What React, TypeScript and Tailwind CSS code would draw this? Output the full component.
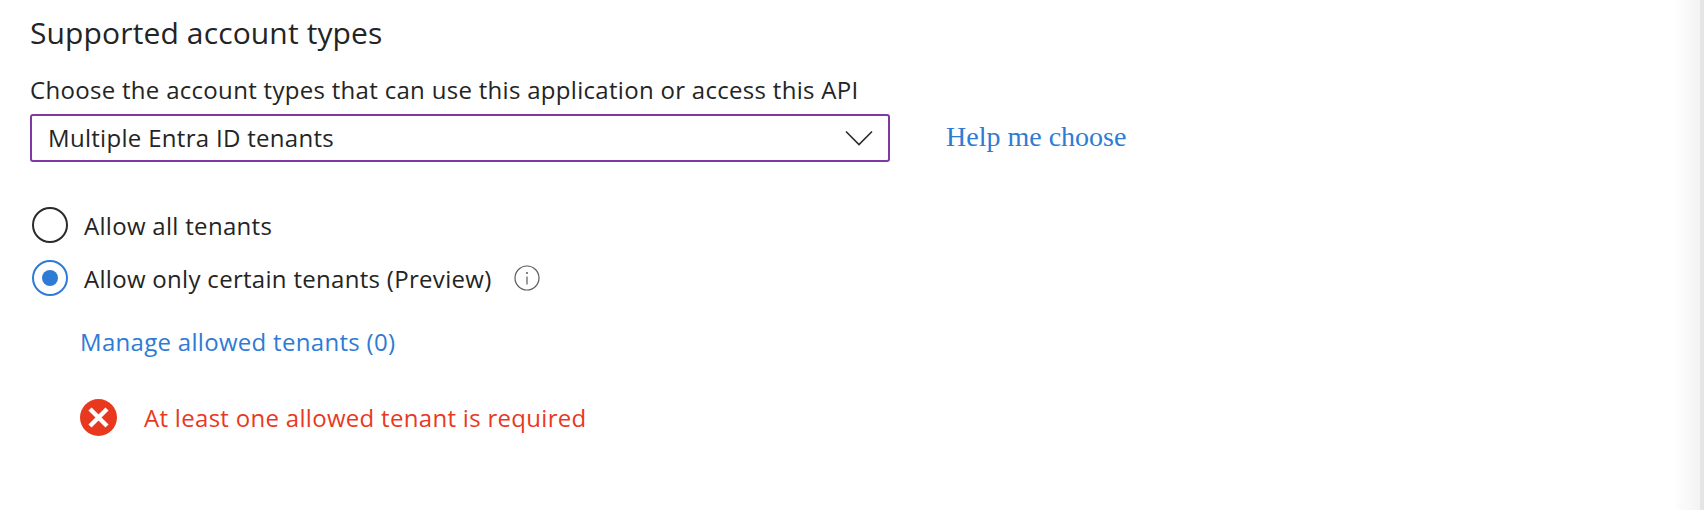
const FONT = "font-['Open_Sans','Noto_Sans',sans-serif]";

function Radio({ label, checked }: { label: string; checked?: boolean }) {
  return (
    <div className="flex items-center h-[40px]">
      <span
        className={`flex items-center justify-center ml-[2px] w-[36px] h-[36px] rounded-full border-2 ${
          checked ? "border-[#2e7bd6]" : "border-[#2b2b2b]"
        }`}
      >
        {checked && <span className="w-[16px] h-[16px] rounded-full bg-[#2e7bd6]" />}
      </span>
      <span className="ml-[16px] pt-[1px] text-[24px] tracking-[0.3px] leading-[40px] text-[#242424]">{label}</span>
    </div>
  );
}

export default function App() {
  return (
    <div className={`flex w-full h-[510px] bg-white overflow-hidden ${FONT}`}>
      <main className="flex-1 pl-[30px]">
        <h2 className="mt-[14px] text-[30px] tracking-[0.13px] leading-[38px] font-normal text-[#242424]">Supported account types</h2>
        <p className="mt-[23px] text-[24px] tracking-[0.3px] leading-[30px] text-[#242424]">
          Choose the account types that can use this application or access this API
        </p>
        <div className="flex items-center mt-[9px]">
          <div className="flex items-center justify-between w-[860px] h-[48px] pl-[16px] pr-[15px] rounded-[3px] border-2 border-[#803a9f] text-[24px] tracking-[0.3px] text-[#242424]">
            <span>Multiple Entra ID tenants</span>
            <svg width="28" height="16" viewBox="0 0 28 16" fill="none" className="text-[#2b2b2b]">
              <path d="M1 1.5L14 14.5L27 1.5" stroke="currentColor" strokeWidth="1.6" />
            </svg>
          </div>
          <a href="#" className="ml-[56px] pb-[2px] font-['Liberation_Serif',serif] text-[28px] text-[#2e7bd6]">
            Help me choose
          </a>
        </div>
        <div className="flex flex-col gap-[13px] mt-[43px]">
          <Radio label="Allow all tenants" />
          <div className="flex items-center">
            <Radio label="Allow only certain tenants (Preview)" checked />
            <svg width="26" height="26" viewBox="0 0 26 26" className="ml-[22px] text-[#5c5c5c]" fill="none">
              <circle cx="13" cy="13" r="12" stroke="currentColor" strokeWidth="1.2" />
              <circle cx="13" cy="8" r="1" fill="currentColor" />
              <path d="M13 11.5v8" stroke="currentColor" strokeWidth="1.2" />
            </svg>
          </div>
        </div>
        <a href="#" className="block mt-[29px] ml-[50px] text-[24px] tracking-[0.3px] leading-[30px] text-[#2e7bd6]">
          Manage allowed tenants (0)
        </a>
        <div className="flex items-center mt-[42px] ml-[50px]">
          <svg width="37" height="37" viewBox="0 0 37 37">
            <circle cx="18.5" cy="18.5" r="18.5" fill="#e8391f" />
            <path d="M10 10l17 17M27 10L10 27" stroke="#fff" strokeWidth="4.4" />
          </svg>
          <span className="ml-[27px] text-[24px] tracking-[0.3px] text-[#e8391f]">At least one allowed tenant is required</span>
        </div>
      </main>
      <div className="flex w-[31px] shrink-0">
        <div className="flex-1 bg-gradient-to-r from-white to-[#f3f3f3]" />
        <div className="w-[4px] bg-[#e5e5e5]" />
      </div>
    </div>
  );
}
